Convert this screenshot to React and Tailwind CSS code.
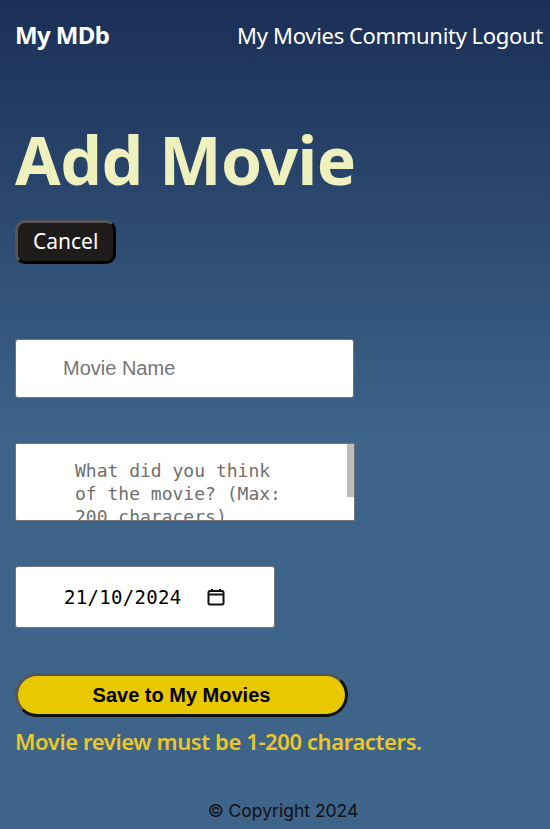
import React from 'react';

const CalendarIcon = () => (
  <svg width="18" height="18" viewBox="0 0 18 18" fill="none">
    <rect x="1.5" y="3" width="15" height="13.5" rx="1.5" stroke="#111" strokeWidth="2" />
    <path d="M1.5 6.5h15" stroke="#111" strokeWidth="2" />
    <path d="M5 1v3M13 1v3" stroke="#111" strokeWidth="2" />
  </svg>
);

const App = () => {
  return (
    <div className="min-h-screen flex flex-col bg-[linear-gradient(to_bottom,#1b2f56_0px,#3e6489_440px,#3e6489_100%)]">
      <nav className="flex items-center justify-between pl-[15px] pr-[7px] h-[70px] font-['Noto_Sans',sans-serif]">
        <a className="text-white font-bold text-[24px] tracking-[-0.6px]">My MDb</a>
        <div className="flex gap-[5px] text-white text-[22px] tracking-[-0.3px]">
          <a>My Movies</a>
          <a>Community</a>
          <a>Logout</a>
        </div>
      </nav>

      <main className="flex-1 px-[15px]">
        <h1 className="text-[#eef0bd] font-bold text-[66px] leading-none mt-[56px] tracking-[-0.5px] font-['Noto_Sans',sans-serif]">
          Add Movie
        </h1>
        <button className="mt-[28px] h-[44px] px-[15px] bg-[#1f1c1c] text-white text-[21px] rounded-[10px] border-[3px] border-[#555] [border-style:outset] font-['Noto_Sans',sans-serif]">
          Cancel
        </button>

        <form className="mt-[75px] flex flex-col items-start font-['Liberation_Sans',Arial,sans-serif]">
          <input
            type="text"
            placeholder="Movie Name"
            className="w-[339px] h-[59px] bg-white border border-[#767676] rounded-[3px] pl-[47px] text-[20px] placeholder:text-[#757575] outline-none"
          />

          <div className="relative mt-[45px] w-[340px] h-[78px] bg-white border border-[#767676] rounded-[2px] overflow-hidden">
            <textarea
              placeholder="What did you think of the movie? (Max: 200 characers)"
              className="w-full h-full resize-none pl-[59px] pr-[60px] pt-[15px] text-[18px] leading-[23px] placeholder:text-[#6f6f6f] outline-none overflow-hidden font-['DejaVu_Sans_Mono',monospace]"
            />
            <div className="absolute right-0 top-0 w-[7px] h-[53px] bg-[#bdbdbd]" />
          </div>

          <div className="mt-[45px] w-[260px] h-[62px] bg-white border border-[#767676] rounded-[3px] flex items-center pl-[48px] gap-[26px] text-[19px] tracking-[0.3px] text-black font-['DejaVu_Sans_Mono',monospace]">
            <span>21/10/2024</span>
            <CalendarIcon />
          </div>

          <button
            type="button"
            className="mt-[45px] w-[333px] h-[44px] bg-[#e8c800] rounded-full border-[3px] border-t-[#555] border-l-[#555] border-r-[#111] border-b-[#111] text-black font-bold text-[20px]"
          >
            Save to My Movies
          </button>
          <p className="mt-[8px] text-[#ecc728] font-semibold text-[22px] tracking-[-0.4px] font-['Noto_Sans',sans-serif]">
            Movie review must be 1-200 characters.
          </p>
        </form>
      </main>

      <footer className="text-center text-[#111] text-[17.5px] pl-[16px] pb-[15px] pt-[40px] font-['Inter',sans-serif]">
        © Copyright 2024
      </footer>
    </div>
  );
};

export default App;
